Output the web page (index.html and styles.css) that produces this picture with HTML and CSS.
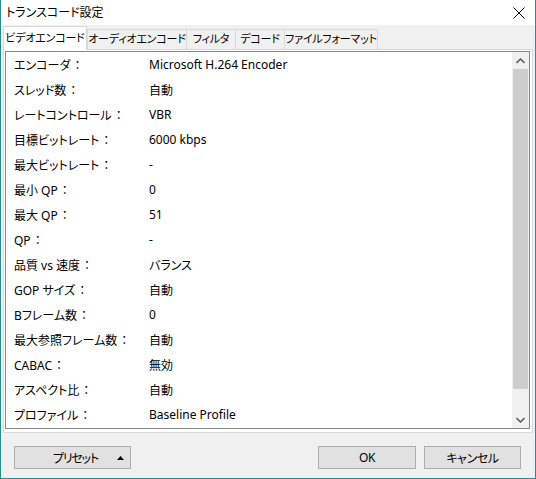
FILE: index.html
```html
<!DOCTYPE html>
<html lang="ja">
<head>
<meta charset="utf-8">
<title>トランスコード設定</title>
<link rel="stylesheet" href="styles.css">
</head>
<body>
<div class="window">
  <div class="titlebar">
    <span class="title">トランスコード設定</span>
    <span class="close">
      <svg width="12" height="12" viewBox="0 0 12 12"><path d="M0.5 0.5 L11.5 11.5 M11.5 0.5 L0.5 11.5" stroke="#000" stroke-width="1" fill="none"/></svg>
    </span>
  </div>
  <div class="client">
    <div class="tabs">
      <div class="tab active t1">ビデオエンコード</div>
      <div class="tab t2">オーディオエンコード</div>
      <div class="tab t3">フィルタ</div>
      <div class="tab t4">デコード</div>
      <div class="tab t5">ファイルフォーマット</div>
    </div>
    <div class="page">
      <div class="listbox">
        <div class="rows">
          <div class="row"><span class="label">エンコーダ<span class="colon">：</span></span><span class="value">Microsoft H.264 Encoder</span></div>
          <div class="row"><span class="label">スレッド数<span class="colon">：</span></span><span class="value">自動</span></div>
          <div class="row"><span class="label">レートコントロール<span class="colon">：</span></span><span class="value">VBR</span></div>
          <div class="row"><span class="label">目標ビットレート<span class="colon">：</span></span><span class="value">6000 kbps</span></div>
          <div class="row"><span class="label">最大ビットレート<span class="colon">：</span></span><span class="value">-</span></div>
          <div class="row"><span class="label">最小 QP<span class="colon">：</span></span><span class="value">0</span></div>
          <div class="row"><span class="label">最大 QP<span class="colon">：</span></span><span class="value">51</span></div>
          <div class="row"><span class="label">QP<span class="colon">：</span></span><span class="value">-</span></div>
          <div class="row"><span class="label">品質 vs 速度<span class="colon">：</span></span><span class="value">バランス</span></div>
          <div class="row"><span class="label">GOP サイズ<span class="colon">：</span></span><span class="value">自動</span></div>
          <div class="row"><span class="label">Bフレーム数<span class="colon">：</span></span><span class="value">0</span></div>
          <div class="row"><span class="label">最大参照フレーム数<span class="colon">：</span></span><span class="value">自動</span></div>
          <div class="row"><span class="label">CABAC<span class="colon">：</span></span><span class="value">無効</span></div>
          <div class="row"><span class="label">アスペクト比<span class="colon">：</span></span><span class="value">自動</span></div>
          <div class="row"><span class="label">プロファイル<span class="colon">：</span></span><span class="value">Baseline Profile</span></div>
        </div>
        <div class="scrollbar">
          <div class="sb-btn">
            <svg width="9" height="6" viewBox="0 0 9 6"><path d="M0.5 5 L4.5 1 L8.5 5" stroke="#606060" stroke-width="1.6" fill="none"/></svg>
          </div>
          <div class="sb-thumb"></div>
          <div class="sb-track"></div>
          <div class="sb-btn">
            <svg width="9" height="6" viewBox="0 0 9 6"><path d="M0.5 1 L4.5 5 L8.5 1" stroke="#606060" stroke-width="1.6" fill="none"/></svg>
          </div>
        </div>
      </div>
    </div>
    <div class="footer">
      <button class="btn preset"><span>プリセット</span><svg class="tri" width="7" height="4" viewBox="0 0 7 4"><path d="M0 4 L3.5 0 L7 4 Z" fill="#000"/></svg></button>
      <div class="spacer"></div>
      <button class="btn ok">OK</button>
      <button class="btn cancel">キャンセル</button>
    </div>
  </div>
</div>
</body>
</html>
```

FILE: styles.css
```css
* { box-sizing: border-box; }
html, body { margin: 0; padding: 0; }
body {
  font-family: "Noto Sans", "Noto Sans CJK JP", sans-serif;
  font-size: 12px;
  font-feature-settings: "palt";
  color: #000;
  background: #fff;
}
.window {
  width: 536px;
  height: 479px;
  border: 1px solid #2e8b8b;
  border-top: 0;
  display: flex;
  flex-direction: column;
  background: #f0f0f0;
}
.titlebar {
  height: 25px;
  background: #fff;
  display: flex;
  align-items: center;
  padding-left: 5px;
  padding-right: 10px;
}
.title { flex: 1; line-height: 25px; }
.close { display: flex; }
.client {
  flex: 1;
  display: flex;
  flex-direction: column;
  padding: 0 2px 0 2px;
}
.tabs {
  display: flex;
  align-items: flex-end;
  height: 23px;
  margin-top: 1px;
}
.tab {
  height: 20px;
  line-height: 18px;
  padding: 0;
  background: #f0f0f0;
  border: 1px solid #d9d9d9;
  border-bottom: 0;
  border-left: 0;
  white-space: nowrap;
  text-align: center;
  font-size: 11px;
  letter-spacing: -0.2px;
}
.tab.t2 { border-left: 1px solid #d9d9d9; }
.tab.active {
  line-height: 21px;
  background: #fff;
  border-left: 1px solid #d9d9d9;
  position: relative;
  z-index: 1;
  margin-bottom: -1px;
  height: 24px;
}
.tab.t1 { width: 84px; }
.tab.t2 { width: 100px; }
.tab.t3 { width: 49px; }
.tab.t4 { width: 49px; }
.tab.t5 { width: 93px; }
.page {
  height: 384px;
  background: #fff;
  border: 1px solid #d9d9d9;
  padding: 1px 2px 3px 1px;
}
.listbox {
  height: 100%;
  border: 1px solid #828790;
  display: flex;
  background: #fff;
}
.rows {
  flex: 1;
  padding-top: 0;
}
.row {
  height: 25px;
  display: flex;
  align-items: center;
  padding-left: 8px;
  white-space: nowrap;
}
.label { width: 135px; }
.colon { font-feature-settings: normal; margin-left: 1px; }
.scrollbar {
  width: 17px;
  display: flex;
  flex-direction: column;
  background: #f0f0f0;
}
.sb-btn {
  height: 17px;
  display: flex;
  align-items: center;
  justify-content: center;
  background: #f0f0f0;
}
.sb-thumb {
  height: 320px;
  background: #cdcdcd;
  margin: 0 1px;
}
.sb-track { flex: 1; }
.footer {
  display: flex;
  align-items: center;
  padding: 13px 12px 0 11px;
}
.spacer { flex: 1; }
.btn {
  font: inherit;
  font-feature-settings: "palt";
  height: 23px;
  background: #e1e1e1;
  border: 1px solid #adadad;
  padding: 0;
  color: #000;
  letter-spacing: -0.4px;
}
.preset {
  width: 117px;
  display: flex;
  align-items: center;
  padding-left: 38px;
  padding-right: 3px;
  letter-spacing: -1.2px;
}
.preset span { flex: 1; text-align: left; }
.tri { margin-right: 3px; }
.ok { width: 98px; margin-right: 8px; }
.cancel { width: 97px; }
```
